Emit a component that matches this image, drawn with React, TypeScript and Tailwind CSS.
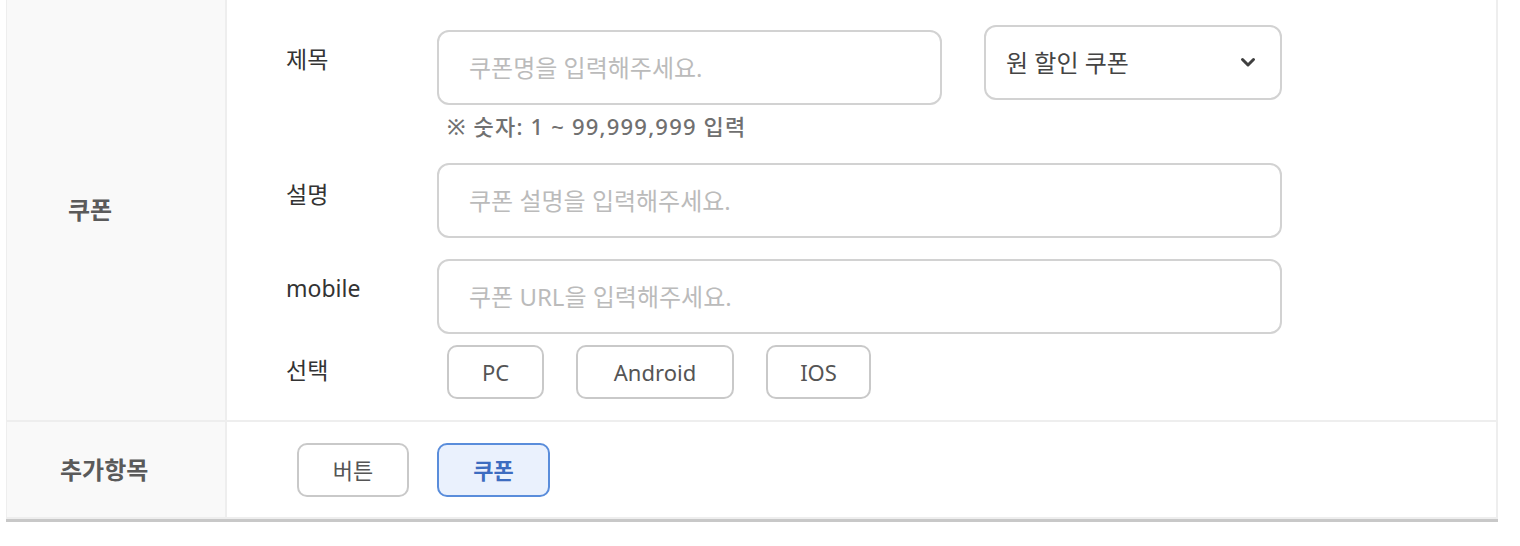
import React from "react";

const font = { fontFamily: '"Noto Sans", "Noto Sans CJK KR", sans-serif' };

function Chevron() {
  return (
    <svg width="16" height="11" viewBox="0 0 16 11" fill="none">
      <path d="M2.5 2.5 L8 8 L13.5 2.5" stroke="#3f3f3f" strokeWidth="3" strokeLinecap="round" strokeLinejoin="round" />
    </svg>
  );
}

function Chip({ label, w, active }: { label: string; w: string; active?: boolean }) {
  return (
    <button
      className={
        active
          ? `${w} h-[54px] rounded-[10px] border-2 border-[#5a8ddb] bg-[#eaf1fd] text-[22px] font-bold text-[#3d6cc0]`
          : `${w} h-[54px] rounded-[10px] border-2 border-[#c9c9c9] bg-white text-[22px] text-[#555555]`
      }
    >
      {label}
    </button>
  );
}

export default function App() {
  return (
    <div className="w-[1520px] h-[546px] bg-white" style={font}>
      <div className="ml-[6px] w-[1492px] border-l border-r-2 border-[#eeeeee] border-b-0">
        {/* Row 1 */}
        <div className="flex border-b-2 border-[#eeeeee]">
          <div className="w-[220px] shrink-0 bg-[#f9f9f9] border-r-2 border-[#eeeeee] flex items-center pl-[61px]">
            <span className="text-[24px] font-bold text-[#5a5a5a]">쿠폰</span>
          </div>
          <div className="flex-1 pl-[59px] pt-[25px] pb-[21px] flex flex-col">
            {/* 제목 */}
            <div className="flex items-start">
              <div className="w-[151px] shrink-0 pt-[16px] text-[23px] text-[#333333] leading-[36px]">제목</div>
              <div className="flex flex-col">
                <div className="flex items-start gap-[42px]">
                  <div className="mt-[5px] w-[505px] h-[75px] rounded-[12px] border-2 border-[#d2d2d2] flex items-center px-[30px]">
                    <span className="text-[24px] text-[#bbbbbb]">쿠폰명을 입력해주세요.</span>
                  </div>
                  <div className="w-[298px] h-[75px] rounded-[12px] border-2 border-[#d2d2d2] flex items-center justify-between pl-[20px] pr-[24px]">
                    <span className="text-[24px] text-[#444444]">원 할인 쿠폰</span>
                    <Chevron />
                  </div>
                </div>
                <div className="pl-[10px] pt-[6px] pb-[2px] text-[22px] font-medium tracking-[1.2px] text-[#707070] leading-[30px]">
                  ※ 숫자: 1 ~ 99,999,999 입력
                </div>
              </div>
            </div>
            {/* 설명 */}
            <div className="flex items-start mt-[20px]">
              <div className="w-[151px] shrink-0 pt-[13px] text-[23px] text-[#333333] leading-[36px]">설명</div>
              <div className="w-[845px] h-[75px] rounded-[12px] border-2 border-[#d2d2d2] flex items-center px-[30px]">
                <span className="text-[24px] text-[#bbbbbb]">쿠폰 설명을 입력해주세요.</span>
              </div>
            </div>
            {/* mobile */}
            <div className="flex items-start mt-[21px]">
              <div className="w-[151px] shrink-0 pt-[11px] text-[23px] text-[#333333] leading-[36px]">mobile</div>
              <div className="w-[845px] h-[75px] rounded-[12px] border-2 border-[#d2d2d2] flex items-center px-[30px]">
                <span className="text-[24px] text-[#bbbbbb]">쿠폰 URL을 입력해주세요.</span>
              </div>
            </div>
            {/* 선택 */}
            <div className="flex items-center mt-[11px]">
              <div className="w-[161px] shrink-0 text-[23px] text-[#333333] leading-[36px] -mt-[4px]">선택</div>
              <div className="flex gap-[32px]">
                <Chip label="PC" w="w-[97px]" />
                <Chip label="Android" w="w-[158px]" />
                <Chip label="IOS" w="w-[105px]" />
              </div>
            </div>
          </div>
        </div>
        {/* Row 2 */}
        <div className="flex border-b-2 border-[#eeeeee]">
          <div className="w-[220px] shrink-0 bg-[#f9f9f9] border-r-2 border-[#eeeeee] flex items-center pl-[53px]">
            <span className="text-[24px] font-bold text-[#5a5a5a]">추가항목</span>
          </div>
          <div className="flex-1 pl-[70px] pt-[21px] pb-[20px] flex gap-[28px]">
            <Chip label="버튼" w="w-[112px]" />
            <Chip label="쿠폰" w="w-[113px]" active />
          </div>
        </div>
      </div>
      <div className="ml-[6px] w-[1492px] h-[3px] bg-[#c8c8c8]" />
    </div>
  );
}
